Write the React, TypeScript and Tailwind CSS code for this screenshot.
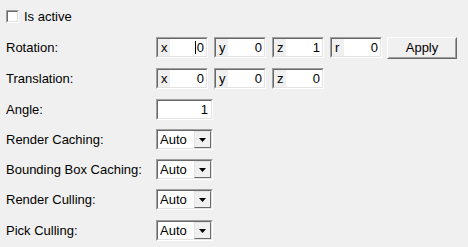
import React from "react";

const font = { fontFamily: '"Liberation Sans", Arial, sans-serif' };

// classic windows sunken frame
function Sunken({ className, children }: { className: string; children: React.ReactNode }) {
  return (
    <div className={`border border-t-[#a0a0a0] border-l-[#a0a0a0] border-r-white border-b-white ${className}`}>
      <div className="flex h-full w-full border border-t-[#696969] border-l-[#696969] border-r-[#e3e3e3] border-b-[#e3e3e3] bg-white">
        {children}
      </div>
    </div>
  );
}

function VecField({ axis, value, cursor }: { axis: string; value: string; cursor?: boolean }) {
  return (
    <Sunken className="h-[21px] w-[52px]">
      <span className="flex w-[12px] items-center bg-[#f0f0f0] pl-[3px] leading-none">{axis}</span>
      <span className="flex flex-1 items-center justify-end pr-[2px] leading-none">
        {cursor && <span className="mr-[1px] h-[13px] w-px bg-black" />}
        {value}
      </span>
    </Sunken>
  );
}

function Combo({ value }: { value: string }) {
  return (
    <Sunken className="h-[21px] w-[57px]">
      <span className="flex flex-1 items-center pl-[2px] leading-none">{value}</span>
      <span className="flex w-[17px] items-center justify-center border border-t-[#e3e3e3] border-l-[#e3e3e3] border-r-[#696969] border-b-[#696969] bg-[#f0f0f0]">
        <svg width="7" height="4" viewBox="0 0 7 4">
          <path d="M0 0h7L3.5 4z" fill="#000" />
        </svg>
      </span>
    </Sunken>
  );
}

function Row({ label, className, children }: { label: string; className: string; children: React.ReactNode }) {
  return (
    <div className={`flex h-[21px] items-center ${className}`}>
      <span className="w-[150px] leading-none">{label}</span>
      <div className="flex items-start gap-[6px]">{children}</div>
    </div>
  );
}

export default function App() {
  return (
    <div className="h-[247px] w-[468px] bg-[#f0f0f0] pl-[6px] text-[13px] text-black" style={font}>
      <div className="flex h-[37px] items-start pt-[10px]">
        <span className="h-[13px] w-[13px] border border-t-[#a0a0a0] border-l-[#a0a0a0] border-r-white border-b-white">
          <span className="block h-full w-full border border-t-[#696969] border-l-[#696969] border-r-[#e3e3e3] border-b-[#e3e3e3] bg-white" />
        </span>
        <span className="ml-[5px] leading-[14px]">Is active</span>
      </div>

      <Row label="Rotation:" className="">
        <VecField axis="x" value="0" cursor />
        <VecField axis="y" value="0" />
        <VecField axis="z" value="1" />
        <VecField axis="r" value="0" />
        <button className="-ml-px h-[22px] w-[70px] border border-t-white border-l-white border-r-[#696969] border-b-[#696969] bg-[#f0f0f0] p-0 leading-none">
          <span className="flex h-full w-full items-center justify-center border border-t-[#f0f0f0] border-l-[#f0f0f0] border-r-[#a0a0a0] border-b-[#a0a0a0]">
            Apply
          </span>
        </button>
      </Row>

      <Row label="Translation:" className="mt-[10px]">
        <VecField axis="x" value="0" />
        <VecField axis="y" value="0" />
        <VecField axis="z" value="0" />
      </Row>

      <Row label="Angle:" className="mt-[10px]">
        <Sunken className="h-[21px] w-[57px]">
          <span className="flex flex-1 items-center justify-end pr-[3px] leading-none">1</span>
        </Sunken>
      </Row>

      <Row label="Render Caching:" className="mt-[9px]">
        <Combo value="Auto" />
      </Row>
      <Row label="Bounding Box Caching:" className="mt-[9px]">
        <Combo value="Auto" />
      </Row>
      <Row label="Render Culling:" className="mt-[9px]">
        <Combo value="Auto" />
      </Row>
      <Row label="Pick Culling:" className="mt-[10px]">
        <Combo value="Auto" />
      </Row>
    </div>
  );
}
